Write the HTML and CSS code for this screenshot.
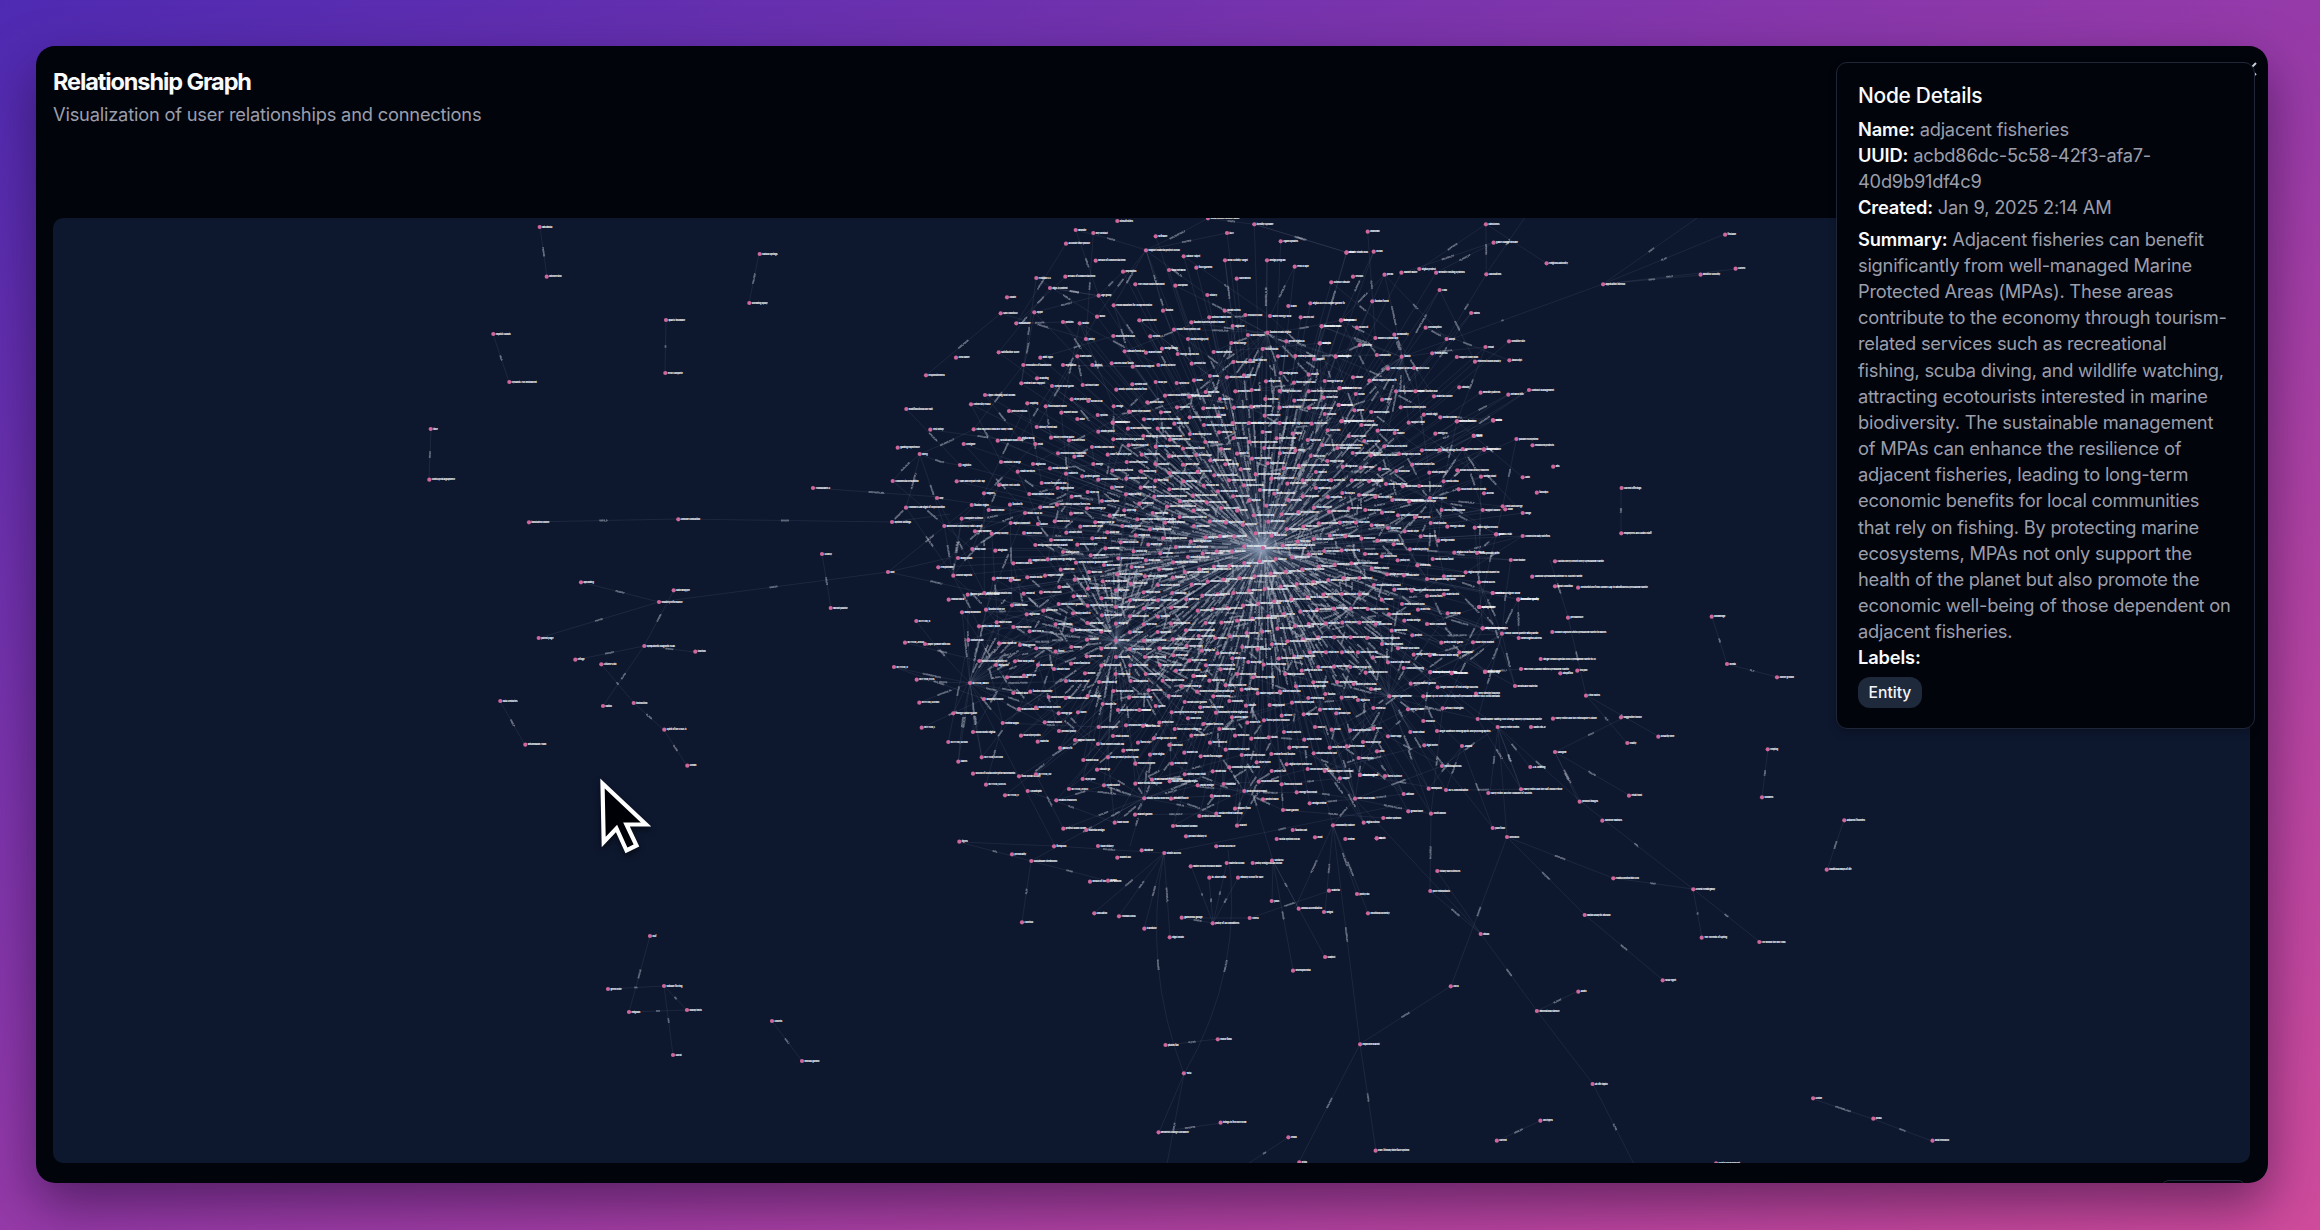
FILE: index.html
```html
<!DOCTYPE html>
<html lang="en">
<head>
<meta charset="utf-8">
<title>Relationship Graph</title>
<link rel="stylesheet" href="styles.css">
</head>
<body>
<main class="window">
  <header class="window-header">
    <h1 class="title">Relationship Graph</h1>
    <p class="subtitle">Visualization of user relationships and connections</p>
  </header>
  <section class="graph">
    <svg class="graph-canvas" id="graph" viewBox="53 218 2197 945" role="img" aria-label="Relationship graph"></svg>
  </section>
  <footer class="window-footer"><span class="footer-button"></span></footer>
  <svg class="close-icon" viewBox="0 0 14 14" aria-hidden="true"><path d="M1 1 13 13M13 1 1 13"/></svg>
  <aside class="details">
    <h2 class="details-title">Node Details</h2>
    <p class="row"><b>Name:</b> adjacent fisheries</p>
    <p class="row"><b>UUID:</b> acbd86dc-5c58-42f3-afa7-<br>40d9b91df4c9</p>
    <p class="row"><b>Created:</b> Jan 9, 2025 2:14 AM</p>
    <p class="row summary"><b>Summary:</b> Adjacent fisheries can benefit<br>significantly from well-managed Marine<br>Protected Areas (MPAs). These areas<br>contribute to the economy through tourism-<br>related services such as recreational<br>fishing, scuba diving, and wildlife watching,<br>attracting ecotourists interested in marine<br>biodiversity. The sustainable management<br>of MPAs can enhance the resilience of<br>adjacent fisheries, leading to long-term<br>economic benefits for local communities<br>that rely on fishing. By protecting marine<br>ecosystems, MPAs not only support the<br>health of the planet but also promote the<br>economic well-being of those dependent on<br>adjacent fisheries.</p>
    <p class="row"><b>Labels:</b></p>
    <span class="tag">Entity</span>
  </aside>
</main>
<svg class="cursor" viewBox="0 0 60 84" aria-hidden="true"><path d="M6.500 8.500 50 49.500H30.500L40.500 70.500 30.500 75.500 20.500 53.500 7.700 67Z"/></svg>
<script src="graph.js"></script>
</body>
</html>
```
FILE: styles.css
```css
* { box-sizing: border-box; }

body {
  margin: 0;
  width: 2320px;
  height: 1230px;
  padding: 46px 52px 47px 36px;
  overflow: hidden;
  position: relative;
  font-family: Inter, "Liberation Sans", sans-serif;
  background: linear-gradient(to bottom right, #4e2ab2 0%, #963aa9 50%, #d04b9c 100%);
}

.window {
  position: relative;
  display: flex;
  flex-direction: column;
  height: 1137px;
  padding: 21px 18px 0 17px;
  border-radius: 19px;
  overflow: hidden;
  background: #02040b;
}

body::before {
  content: "";
  position: absolute;
  inset: 46px 52px 47px 36px;
  border-radius: 19px;
  box-shadow: 0 22px 52px rgba(20, 5, 40, .5);
}

.window-header { flex: none; height: 151px; }

.title {
  margin: -1px 0 0;
  color: #f8fafc;
  font-size: 23.5px;
  font-weight: 650;
  line-height: 32px;
  letter-spacing: -1.1px;
}

.subtitle {
  margin: 3px 0 0;
  color: #9a9eab;
  font-size: 18.3px;
  line-height: 26px;
  letter-spacing: -.2px;
}

.graph {
  flex: none;
  height: 945px;
  border-radius: 10px;
  overflow: hidden;
  background: #0d172e;
}

.graph-canvas { display: block; width: 100%; height: 100%; }
.edge { fill: none; stroke: #94a3b8; stroke-opacity: .15; stroke-width: .8; }
.edge-label {
  fill: #b4bac6;
  stroke: #b4bac6;
  stroke-width: .25px;
  opacity: .56;
  font: 700 2.1px Inter, "Liberation Sans", sans-serif;
  text-anchor: middle;
}
.node { fill: #d0679a; }
.node-label {
  fill: #f1f5f9;
  stroke: #f1f5f9;
  stroke-width: .12px;
  font: 700 2.1px Inter, "Liberation Sans", sans-serif;
}

.window-footer {
  flex: none;
  display: flex;
  justify-content: flex-end;
  padding: 17px 4px 0 0;
}

.footer-button {
  width: 85px;
  height: 46px;
  flex: none;
  border: 1px solid #1e293b;
  border-radius: 8px;
}

.close-icon {
  position: absolute;
  left: 2207px;
  top: 16px;
  width: 14px;
  height: 14px;
  fill: none;
  stroke: #cbd0d8;
  stroke-width: 2;
}

.details {
  position: absolute;
  left: 1800px;
  top: 16px;
  width: 419px;
  height: 667px;
  padding: 17px 21px;
  border: 1px solid #1e2638;
  border-radius: 11px;
  background: #02040b;
  color: #9a9eab;
  white-space: nowrap;
  box-shadow: 0 4px 8px rgba(0, 0, 0, .2);
}

.details-title {
  margin: 0 0 4.500px;
  color: #f8fafc;
  font-size: 20.9px;
  font-weight: 550;
  line-height: 31px;
  letter-spacing: -.27px;
}

.row { margin: 0; font-size: 18.3px; line-height: 26.17px; letter-spacing: -.23px; }
.row b { color: #f8fafc; font-weight: 600; letter-spacing: -.15px; }
.summary { margin-top: 5.5px; }

.tag {
  display: inline-block;
  margin-top: 6px;
  padding: 0 10.5px;
  border-radius: 12px;
  background: #1e293b;
  color: #f1f5f9;
  font-size: 15.700px;
  font-weight: 500;
  line-height: 31px;
}

.cursor {
  position: absolute;
  left: 596px;
  top: 775px;
  width: 60px;
  height: 84px;
  fill: #000106;
  stroke: #fff;
  stroke-width: 4.2;
  filter: drop-shadow(0 3px 3px rgba(0, 0, 0, .55));
}
```
FILE: graph.js
```js
// Node data is stored in sections; every section has its own origin and scale.
// A node is "x,y,label" (or a label width, for which a name is composed).
const sections = [
  { x: 1100, y: 420, sx: 3, sy: 3, core: true, nodes: `
38,8,36;84,26,66;173,26,36;223,11,40;312,15,96;398,9,92;447,9,150;539,9,100;635,11,38;724,4,60;784,15,50;833,32,56;926,8,38;1071,4,56;1180,2,20;
40,58,92;130,48,124;210,59,62;270,42,62;357,37,36;401,54,30;488,36,28;530,55,52;578,41,30;623,60,40;683,31,36;746,48,44;793,63,40;884,39,24;1006,41,30;1121,47,24;
23,104,72;86,76,60;125,104,48;167,80,74;207,109,70;249,86,62;289,105,46;316,66,32;363,87,24;411,101,30;447,66,80;493,84,92;540,100,48;586,92,28;632,108,40;667,75,116;712,84,60;758,99,82;812,106,88;853,79,60;897,102,66;966,91,60;1019,90,86;1088,87,60;1152,88,46;
80,126,60;37,152,66;123,154,36;166,132,34;208,159,92;249,134,40;293,155,34;331,121,66;376,133,34;422,148,24;456,116,48;503,130,44;551,145,38;596,137,92;648,156,30;682,123,42;728,140,36;782,143,34;839,147,20;889,153,34;937,134,62;988,158,50;1072,151,86;1143,170,38;
79,176,48;36,203,30;122,203,40;166,182,36;208,208,48;251,184,34;311,197,36;343,166,66;387,181,80;432,196,62;467,163,72;514,176,66;562,191,48;608,181,92;648,204,38;694,181,34;755,181,90;807,184,40;858,192,62;908,199,56;957,198,60;1031,184,36;1076,208,76;1152,220,28;
78,223,44;6,243,50;118,251,36;163,230,90;240,244,70;278,227,72;354,214,50;320,247,58;399,229,44;447,242,34;480,210,50;523,221,66;565,240,32;608,229,40;684,231,36;727,219,34;777,225,54;826,231,48;877,240,86;927,245,80;990,234,48;
29,287,42;73,271,34;158,279,40;201,260,90;239,291,72;281,272,40;363,264,50;411,272,28;499,257,54;461,286,60;545,283,50;595,276,60;642,263,56;687,275,60;746,265,34;796,270,54;846,278,42;894,286,56;945,292,40;1025,270,66;1148,270,44;
67,318,56;112,298,110;150,328,60;195,308,54;282,318,40;330,304,54;378,308,56;428,314,36;505,305,40;560,327,50;610,320,36;656,310,60;720,308,48;768,308,40;815,316,34;864,324,32;914,334,36;992,309,50;1042,320,46;1124,323,70;
22,337,32;107,346,36;189,355,66;62,367,50;145,374,34;272,365,60;317,352,56;360,349,46;403,350,34;467,340,66;515,347,48;593,365,36;641,357,56;690,347,50;736,349,36;784,356,32;832,362,62;881,373,20;930,388,60;962,349,44;1015,362,46;1188,343,16;
16,385,36;101,394,36;181,400,32;228,381,92;308,401,60;350,394,40;397,395,34;433,379,62;488,384,120;548,377,90;626,403,36;673,393,50;725,391,56;795,402,34;846,409,36;893,421,32;998,417,56;1063,398,96;1131,399,70;
12,435,40;55,415,66;95,441,32;138,421,40;219,427,66;264,411,62;342,440,50;387,438,60;433,429,56;479,424,40;527,417,28;577,412,46;656,440,50;704,434,60;754,430,74;815,446,48;861,463,60;952,436,32;912,466,36;1097,457,100;
51,463,70;135,469,60;177,448,36;254,456,66;298,448,92;218,473,34;323,485,60;370,479,50;417,474,44;464,469,66;512,461,56;558,455,50;607,448,62;639,486,46;685,480,60;730,474,48;778,474,34;822,495,80;883,509,60;935,512,106;981,477,86;1032,469,56;1137,487,40;1178,519,30;
8,484,66;92,491,42;174,495,66;48,511,40;131,517,44;217,519,30;275,494,36;400,519,60;447,512,36;494,507,66;542,500,40;590,492,60;353,523,34;307,527,60;623,532,56;670,524,66;726,522,50;778,523,24;845,539,32;906,552,60;981,528,40;1032,523,44;
5,535,56;90,541,76;174,541,66;259,538,30;429,557,40;475,551,62;523,544,56;573,538,60;382,564,50;338,567,50;293,572,42;48,561,50;132,565,40;213,563,38;651,569,50;701,566,36;752,566,40;803,567,58;867,583,56;954,569,30;913,602,40;1043,580,30;1137,561,40;
6,586,56;90,589,50;174,590,30;601,575,50;552,582,30;505,589,46;457,596,66;411,602,50;364,608,34;317,609,28;213,611,56;131,613,40;48,611,30;626,612,46;678,610,34;727,608,50;778,608,56;828,612,40;875,632,36;981,612,46;1148,625,70;
4,635,30;90,637,32;173,636,36;258,631,90;584,618,56;532,626,40;487,635,24;440,639,30;391,649,56;345,654,34;296,648,40;655,652,46;703,652,60;752,652,50;801,654,106;937,646,30;846,672,66;608,658,50;562,664,60;516,673,40;48,662,34;132,662,66;218,658,90;1024,668,60;1119,667,60;
4,686,40;90,687,64;178,685,80;260,678,40;306,692,34;353,700,56;397,715,32;427,681,60;472,687,34;583,710,60;630,697,34;678,697,36;726,697,30;774,697,60;818,713,54;894,685,60;941,704,62;990,706,80;1078,697,30;
48,711,36;135,711,60;220,706,40;268,722,50;445,726,36;536,716,66;491,734,60;864,727,60;911,744,50;4,737,50;91,736,42;180,735,66;318,736,80;362,748,50;411,762,56;655,741,50;702,740,34;751,741,56;605,752,60;228,752,66;47,762,40;137,762,34;281,768,32;459,772,60;555,762,48;797,758,60;991,757,76;1055,760,40;1155,756,40` },

  { x: 850, y: 210, sx: 3, sy: 3, core: true, nodes: `
802,33,Biosafecities;677,60,website;730,69,key contact;648,101,accurate time phrase;917,79,software;1074,25,92;1213,43,identity Speaker;1131,69,jazz;1292,94,Agam updates;888,121,104;1001,139,Glickor Taipei;737,152,breach of commercial term;1039,173,food gardens;957,180,solar network;1125,151,Ideal Activity Target;1251,151,design program;1334,170,Prob.B Iape;819,185,population;856,223,The Urban South Parlment;976,227,European;1160,206,hard works;1490,127,20;1444,217,54;
559,204,Position 5.5;646,200,breach of commercial term;600,234,high-tl content;471,262,curate;746,257,age group;1072,255,28;452,310,San Francisco;553,307,Apple;791,286,Pulmo Maldives for comprehension;741,320,wash;939,302,fashion;1124,302,44;1315,288,28;1381,280,104;1078,322,60;1186,315,52;1260,318,60;1352,322,32;1024,337,98;1473,331,32;499,340,sustainable;639,336,policies;689,340,seattle;868,331,46;972,359,76;1148,348,34;1415,349,54;1252,368,80;1194,375,42;708,387,25;790,378,66;901,379,20;1014,387,60;1144,399,44;1309,394,54;1410,400,32;446,427,satisfaction score;824,424,60;888,428,50;936,416,44;983,432,52;1091,426,50;1238,417,46;318,443,Area name;571,443,Mini Apps;682,439,38;1284,439,26;1336,438,56;1392,447,26;1457,440,40;
520,465,renovation of illuminated;639,465,legislation;727,465,28;785,460,64;848,470,66;925,465,50;1025,461,36;1150,456,60;1201,452,48;228,496,responsiveness;561,505,branding;1292,489,46;1080,498,24;1131,502,70;1182,496,32;1376,494,30;514,520,66;606,528,58;698,525,42;847,523,36;917,516,30;980,519,30;1032,511,24;1248,514,36;1332,518,62;1424,513,50;799,539,86;1067,546,34;1156,544,38;1205,540,24;1289,543,60;1376,544,86;1468,535,32;405,555,Lippo Climbing Beat Shows;945,557,110;1018,560,66;665,568,56;715,573,44;363,583,University Prada;532,580,sopping;1110,567,28;1246,567,36;1333,572,60;1421,563,32;892,577,40;791,589,24;587,589,54;169,597,multifunctional use suit;477,603,petrochemicals;634,608,40;837,605,60;981,592,34;933,607,28;1060,595,66;1152,593,50;1203,590,60;1289,593,66;1377,594,72;1466,585,36;743,615,26;1105,617,28;1244,617,40;1424,612,20;1019,622,94;
682,627,mine;788,638,40;882,628,110;241,659,Test setup;371,658,Click on Demo onboard Tabby Town;560,651,60;745,665,50;143,713,gaming experience;209,732,Keng;443,692,sustainable leadership;508,686,digital world;341,702,Designer;556,702,20;603,683,66;657,691,40;726,711,60;624,730,86;673,740,28;453,756,emission change;549,762,32;600,775,50;730,762,28;330,765,logistics;503,785,email services;648,791,32;697,799,50;128,813,Commercial Resolution;320,814,Take and Depart Paid Tap;447,825,Gluten Tort Audits;575,819,66;623,834,46;745,809,56;713,846,30;538,852,70;402,850,support;665,860,28;168,893,Common Law Right of Reproduction;261,864,Key;365,885,fixation region;480,884,32;416,900,Nano Demos;571,892,38;621,884,104;525,909,46;711,895,50;663,911,32;126,936,System Settings;283,948,Movement created by Paint Layout;335,926,Computer Science;482,939,54;564,942,26;614,934,36;691,950,60;736,937,50;375,964,Easy Browser;425,971,Jenny Archey;522,969,54;649,968,44;603,990,62;727,985,40;556,1005,96;682,1004,54;367,1017,Body Scan;436,1022,Biogtown;639,1026,40;722,1036,36;324,1044,Mally Glass;490,1060,50;540,1052,38;593,1048,76;678,1058,82;265,1072,Peopletower;632,1079,36;717,1086,34;310,1097,Course Bapesta;431,1106,58;482,1111,30;532,1102,40;585,1097,48;674,1109,50;628,1131,28;114,1086,Red;714,1136,60` },

  { x: 1300, y: 210, sx: 2.851, sy: 3, core: true, nodes: `
193,65,unknown;530,43,rainstorms;552,98,game change blocker;1212,74,firstable;703,160,religious authority;1242,176,Gloves;1142,194,Monitor Security;864,223,application interval;132,128,60;210,125,20;151,200,22;241,194,16;289,188,46;340,177,50;388,188,Website Hosting Systems;531,193,calculations;398,240,CNN;206,274,54;488,309,raters;117,331,44;62,349,50;162,353,30;358,353,consumption;57,400,28;170,405,30;215,384,60;269,374,34;418,387,adopt;596,394,sensitive site;529,411,result;377,430,yellow dress;101,439,36;219,435,32;290,440,20;447,441,58;597,451,javascript;499,455,Pinterest board beauty;251,476,88;325,474,50;151,502,30;198,512,78;274,544,86;329,544,60;113,534,60;159,552,18;454,532,25;515,548,website patterns;653,540,contract management;594,554,network info;382,559,54;234,569,30;110,585,36;287,592,66;155,601,20;203,606,46;353,614,36;400,622,44;447,634,50;119,633,96;550,630,match;
496,678,taxes;617,687,parallel ecosystem;663,706,enhanced projects;525,719,Judge's score;722,770,kits;635,802,auth;675,848,fanships;578,889,Cleat and Energy;635,909,range;635,978,connected daily briefers;917,834,current offerings;916,970,employees and casino staff;601,1050,store inside;560,973,46;585,898,20;727,1054,Cactus Berry Desert Berry Eyeshadow Palette;662,1100,Glamour Eyeshadow Extreme 12 Accent Palette;727,1129,great condition;793,1133,Aestheticized from Gender Gap to Mindfulness Eyeshadow Palette;622,1168,innovative quality` },

  { x: 880, y: 590, sx: 3, sy: 3, core: true, nodes: `
206,29,Human Rural;263,14,88;313,9,80;431,11,28;483,7,50;581,19,36;396,46,38;246,67,dump drummed;318,59,52;536,42,74;440,73,36;490,62,36;579,70,54;623,47,70;109,93,BUTTON_B;297,109,60;350,97,38;400,111,48;449,124,BUTTON_A;527,103,40;577,121,90;622,99,44;75,158,BUTTON_JUDGE;135,162,paper powder with ms;265,150,38;357,160,50;420,165,44;469,175,42;621,149,30;527,185,28;574,171,20;42,231,BUTTON_R;298,213,80;348,225,36;405,214,60;474,225,40;522,237,44;573,221,54;620,199,40;110,269,BUTTON_PLUS;270,279,BUTTON_MENU;381,262,56;432,257,30;615,250,20;558,273,62;657,276,50;752,273,54;848,272,66;988,272,50;940,258,32;
118,338,BUTTON_SOUND;312,327,Maplespi search;400,309,36;451,305,56;506,321,60;557,324,66;623,318,32;700,303,60;747,323,70;806,301,34;866,318,36;903,289,54;951,305,106;1000,319,40;1037,286,60;1085,299,50;1133,310,70;1200,305,54;1248,289,90;1300,277,38;1371,276,60;1421,282,66;1473,297,30;1285,324,40;1336,312,30;1385,323,50;1434,330,34;
220,370,66;417,357,54;468,353,66;536,370,34;594,367,28;668,342,34;714,360,88;778,360,30;827,348,20;875,367,90;914,336,60;961,352,66;1008,368,88;1048,333,34;1098,347,28;1169,345,44;1236,338,66;1205,377,30;1271,373,44;1320,359,60;1369,370,36;1480,354,30;
125,413,BUTTON_L;205,456,BUTTON_SEVEN;279,426,66;368,399,40;423,437,60;494,397,46;537,423,50;656,411,54;738,406,60;789,408,46;838,398,40;884,417,80;924,385,32;970,402,60;1018,417,44;1056,382,40;1102,398,30;1152,391,76;1212,426,44;1305,411,28;1355,419,24;1411,421,60;1480,416,24;
235,515,tables;305,502,BUTTON_CATHAN;473,455,25;540,474,34;585,450,60;654,462,70;699,438,40;774,458,34;822,445,66;868,465,34;934,437,36;990,458,50;1037,479,66;1065,437,34;1114,446,54;1166,442,26;1273,449,50;1228,473,42;1349,473,60;1400,469,50;1449,456,50;730,482,38;810,494,44;684,502,88;913,488,32;962,499,60;1085,495,72;1174,492,74;1301,490,70;1436,504,40;1491,484,16;
610,510,44;766,521,54;876,521,40;1130,517,46;1220,523,80;1048,532,90;651,539,34;279,551,School of Social Enterprise Movements;417,559,60;468,553,BUTTON_DV;998,544,34;1175,543,40;1283,537,60;1334,543,76;1440,555,50;914,553,66;608,567,34;816,569,94;869,574,76;1380,565,20;
318,584,BUTTON_SOCIAL;672,586,44;766,581,72;953,586,44;1031,582,24;1136,575,60;1205,583,56;375,616,BUTTON_U;443,603,Cleanliquid;567,597,BUTTON_AUDIO;1093,603,70;1250,607,56;529,631,related resources;793,625,76;873,626,50;995,618,48;1149,628,40;1289,640,44;1425,626,60;765,674,46;1065,656,40;1209,660,42;958,678,60;1009,671,80;704,698,34;879,708,64;1071,707,20;1359,706,60;1451,698,46;550,716,60;619,720,50;918,739,60;1238,720,40;1190,747,66;1305,742,14;1396,747,22;1490,745,20;
238,755,tigers;396,793,personality;454,813,sustainable livelihoods;522,769,firespoon;654,768,44;712,803,32;785,781,30;853,789,44;1009,769,50;932,829,86;1040,819,46;1118,819,84;1176,812,30;988,863,in-Store Initial;1074,863,Kinsley (2018) for sale;630,875,breach of the Senior Women;684,872,24;1347,902,30;1431,912,32;1175,933,polls;1256,956,annual accreditation;1332,966,height;1464,970,emotional honesty;643,970,Education;717,979,Thomas Erbla;905,983,glamorous garage;1109,984,Chess;998,1000,policy of all committees;426,997,Carnival;793,1016,transistor;869,1042,night death` },

  { x: 1350, y: 590, sx: 3, sy: 3, core: true, nodes: `
505,29,innovative quality;654,83,permanence;428,9,Onesie X Designer Show;388,51,Spring Party;398,115,Disposable Sphere;456,131,Colour-based palette with palette;607,126,Double Exposed Vivid Eyeshadow Palette in Nudes;506,144,New English actress;572,207,Single Vessel Special 2000 Eyeshadow Palette in 32;513,237,Two Push Glamour Mixed Eyeshadow Palette;495,288,breathable material;405,245,40;631,250,simplified;682,242,tea pull;708,317,Field Notes;378,311,very silently touched;220,319,Make Up For Ever Artist Rainproof Eyeshadow Palette Vol 2 Artist Metallic;118,319,60;241,246,86;305,249,40;182,281,70;263,292,target number of text design success;174,358,50;278,355,privacy strategies;220,393,34;383,387,Omnichanne Talking Four Strange Money Eyeshadow Palette;609,386,Harry Potter and the Philosopher's Stone;443,411,Harry Potter series;543,411,Radio Hill Jr;813,382,suggestive theme;925,440,Rosarity here;832,459,reality;181,426,40;261,423,larger audience demographic and psychographics;336,468,Joanna;223,466,light meter;114,439,34;615,486,Glasgow;276,528,traditional meals;541,531,J.K. Rowling;161,612,attitude;236,596,workpaste;288,600,85% concentration;105,558,46;30,555,50;513,598,Harry Potter and the Half-Blood Prince;415,609,Harry Potter and the Chamber of Secrets;837,617,retail trust;689,635,product images;757,692,Amelrhe Watson.;175,664,global trade;243,671,Arctic Moon;100,684,online systems;80,745,EQ;428,714,park floor;471,741,Research;790,865,Punish behind into Sex;1030,898,Ernest Hemingway;262,843,totally bad sciences;241,903,pure enthusiasts;392,1032,Rivals;704,975,Mujun analytic disease;1055,1043,The Torrents of Spring;1228,1056,For Whom the Bell Tolls;1085,80,knowledge;1131,222,media;1281,262,Above ground;1253,478,Helping;1236,622,showers;1483,691,adjacent fisheries;1430,839,traditional ways of life` },

  { x: 420, y: 210, sx: 3, sy: 3, nodes: `
359,51,Michikota;380,200,Introversion;1019,132,natural springs;988,279,shedding spray;738,330,quartz insoluble;736,489,error complete;220,372,explicit classic;268,516,Dynamic 790 Instrument;32,657,time;28,809,contra postalgraphene;1179,834,ThomasMPA 9;327,937,illustrated course;775,928,console consultion;1206,1032,Grassy;1232,1194,Mount paultor;483,1117,upholding;761,1141,bath wrapper;717,1176,volatile performance` },

  { x: 480, y: 540, sx: 3, sy: 3, nodes: `
176,294,parent page;493,318,sympathetic magnetic scan;646,335,tourism;286,359,refuge;364,373,Citizen's Bill;369,498,nation;461,489,instruction;553,569,Spirit of the 2025 tl;622,677,Drown;61,483,data centuries;136,614,Wickelbaum Tram` },

  { x: 1080, y: 860, sx: 1.742, sy: 3, nodes: `
427,291,Subject;371,332,developmental;646,379,Abcs;868,395,audio;796,453,dimensional silence;1015,361,solar egret;488,553,exploded market;149,555,pilates fan;240,538,endor films;181,640,Yuta;893,672,air life liquid;137,817,wellness change consumer;245,788,things to feel here now;363,832,redux;515,872,user-friendly interface system;382,907,lotus;802,782,cell types;726,842,current;1277,715,clothe;1382,776,polka;1485,842,beat research;1108,910,barrier measurement` },

  { x: 580, y: 920, sx: 1, sy: 1, nodes: `
70,16,leaf;28,69,green note;84,66,suitable fix ring;49,92,enigmas;107,90,hobby tents;93,135,Ghost;192,101,comets;222,141,Nebula garden` }
];

// Straight or bent connections: "x1,y1,x2,y2[,label width[,bend]]" in page pixels.
const links = `
540,227,547,277,10;759,254,749,303,11;666,320,665,373,3;493,334,509,382,6;431,429,429,480,7;529,522,678,519,8;678,519,892,522,8;892,522,950,514,0;813,488,940,497,18;
822,554,831,608,8;659,602,888,572,8;888,572,953,557,0;581,582,659,602,8;539,638,659,602,8;674,590,644,646,8;644,646,603,706,8;644,646,695,652,8;644,646,575,660,8;601,664,634,703,3;634,703,664,730,8;664,730,687,766,8;500,701,525,745,8;
650,936,629,1012,10;608,989,664,986,3;664,986,687,1010,3;664,986,673,1055,4;629,1012,687,1010,5;772,1021,802,1061,7;
1621,488,1621,533,6;1712,617,1727,664,5;1727,664,1777,677,6;1768,749,1762,797,7;1844,820,1827,870,8;1813,1099,1873,1119,18;1873,1119,1932,1141,7;
1603,284,1725,234,7;1603,284,1736,269,7;1603,284,1701,275,7;1603,284,1700,216,7;1603,284,1402,357,4;1486,224,1546,263,0;1494,242,1402,273,16;1486,274,1530,210,7;
1586,695,1627,743,6;1586,695,1658,736,4;1586,695,1568,617,10;1568,617,1550,560,12;1555,752,1627,716,7;1555,752,1629,795,8;1555,752,1580,801,16;1555,752,1578,801,8;
1498,727,1490,793,8;1498,727,1521,789,8;1498,727,1530,767,7;1580,801,1693,889,6;1580,801,1498,727,8;1613,878,1693,889,6;1693,889,1702,938,5;1693,889,1760,942,6;1507,837,1613,878,12;1507,837,1585,915,12;1585,915,1663,980,8;1507,837,1451,986,10;1389,696,1493,828,12;1389,696,1431,814,10;1431,814,1430,891,15;1430,891,1481,934,13;1437,871,1481,934,0;1355,799,1481,934,0;1481,934,1537,1011,8;1537,1011,1578,991,10;1537,1011,1593,1084,0;1593,1084,1637,1170,8;1451,986,1360,1044,10;1360,1044,1299,1162,11;1360,1044,1376,1151,8;1333,825,1360,1044,16;1333,825,1295,908,14;1333,825,1325,912,10;1333,825,1368,913,18;1333,825,1357,894,18;1498,727,1507,837,0;
1164,853,1094,913,10;1164,853,1119,916,8;1164,853,1144,929,11;1164,853,1170,937,18;1164,853,1054,846,14;1164,853,1400,805,7;1054,846,960,842,0;1144,798,1031,861,10;1144,798,1063,829,10;1144,798,1087,830,10;1144,798,1130,846,9;1031,861,1022,922,7;959,842,1031,861,6;1031,861,1108,881,6;970,683,1055,846,0;1213,923,1191,866,5;1213,923,1209,878,5;1213,923,1227,863,5;1213,923,1238,878,6;1213,923,1182,918,8;1182,918,1250,918,0;1250,918,1329,891,12;1273,861,1272,901,0;1273,861,1293,970,8;1273,861,1325,957,0;1273,861,1299,909,4;1273,861,1237,740,10;
1130,1045,1166,1045,0;1166,1045,1218,1039,9;1159,1132,1221,1123,12;1159,1132,1184,1074,0;1184,1074,1228,850,14,40;1184,1074,1164,853,12,-32;1184,1074,1164,1180,10;1497,1141,1540,1121,10;1289,1137,1240,1169,4;`.replace('1130,1045,1166,1045,0;', '');

// Nodes which gather most of the remaining connections, with their reach.
const hubs = [
  [1263, 548, 330, .8], [1116, 641, 150, .5], [970, 683, 105, .45], [1502, 634, 90, .4],
  [1389, 696, 120, .25], [1402, 357, 105, .3], [1267, 333, 110, .3], [1146, 250, 90, .25],
  [1144, 798, 80, .35], [1355, 799, 80, .4], [1267, 612, 70, .2], [920, 454, 62, .35],
  [1350, 609, 70, .25], [953, 576, 70, .25], [1430, 500, 80, .35], [1244, 791, 80, .25]
];

const words = 'market design retail fashion style research policy garden water health social brand product climate energy urban local market food music travel trade media culture community digital material history access science studio color project review solar forest ocean support modern system'.split(' ');
const relations = ['RELATES_TO', 'INCLUDES', 'HAS_FEATURE', 'IS_PART_OF', 'PROMOTES', 'PROVIDES_ACCESS', 'SUPPORTS', 'INVOLVES', 'CONTRIBUTES_TO', 'DISCUSSES', 'IS', 'USES', 'HAS'];

let seed = 7;
const random = () => (seed = (seed * 16807) % 2147483647) / 2147483647;
const pick = list => list[Math.floor(random() * list.length)];

function compose(length) {
  let text = pick(words);
  while (text.length < length - 2) text += ' ' + pick(words);
  return text.slice(0, Math.max(3, length)).trim();
}

function relation(width) {
  const length = Math.max(2, Math.round(width / 1.45));
  let text = pick(relations);
  while (text.length < length - 1) text += '_' + pick(relations);
  return text.slice(0, length);
}

const nodes = [];
for (const s of sections) {
  for (const item of s.nodes.split(';')) {
    const [x, y, ...rest] = item.trim().split(',');
    const name = rest.join(',');
    const label = /^\d+$/.test(name) ? compose(Math.round(name / 3.3)) : name;
    nodes.push({ x: s.x + x / s.sx, y: s.y + y / s.sy, label, core: !!s.core });
  }
}

const lines = [], captions = [];
function connect(x1, y1, x2, y2, width, bend = 0) {
  const mx = (x1 + x2) / 2, my = (y1 + y2) / 2;
  const d = Math.hypot(x2 - x1, y2 - y1) || 1;
  const cx = mx - (y2 - y1) / d * bend, cy = my + (x2 - x1) / d * bend;
  lines.push(`M${x1.toFixed(1)} ${y1.toFixed(1)}Q${cx.toFixed(1)} ${cy.toFixed(1)} ${x2.toFixed(1)} ${y2.toFixed(1)}`);
  if (!width) return;
  let angle = Math.atan2(y2 - y1, x2 - x1) * 180 / Math.PI;
  if (angle > 90) angle -= 180;
  if (angle < -90) angle += 180;
  const px = (mx + cx) / 2, py = (my + cy) / 2;
  captions.push(`<text class="edge-label" transform="translate(${px.toFixed(1)} ${py.toFixed(1)}) rotate(${angle.toFixed(1)})" y=".7">${relation(width)}</text>`);
}

for (const link of links.split(';')) {
  const v = link.trim().split(',').map(Number);
  if (v.length >= 4) connect(...v);
}

const core = nodes.filter(n => n.core && n.x < 1530 && n.y < 830);
for (const n of core) {
  for (const [hx, hy, reach, share] of hubs) {
    const d = Math.hypot(n.x - hx, n.y - hy);
    if (d > 6 && d < reach && random() < share) {
      connect(hx, hy, n.x, n.y, Math.min(d * .4, 8 + random() * 14), (random() - .5) * 8);
    }
  }
  if (random() < .65) {
    const near = core.filter(m => m !== n && Math.hypot(m.x - n.x, m.y - n.y) < 110);
    if (near.length) {
      const m = pick(near);
      const d = Math.hypot(m.x - n.x, m.y - n.y);
      connect(n.x, n.y, m.x, m.y, d > 18 ? 7 + random() * 9 : 0);
    }
  }
}

document.getElementById('graph').innerHTML =
  `<g>${lines.map(d => `<path class="edge" d="${d}"/>`).join('')}</g>` +
  `<g>${captions.join('')}</g>` +
  nodes.map(n => `<circle class="node" cx="${n.x.toFixed(1)}" cy="${n.y.toFixed(1)}" r="2.1"/><text class="node-label" x="${(n.x + 2.5).toFixed(1)}" y="${(n.y + .7).toFixed(1)}">${n.label}</text>`).join('');
```
